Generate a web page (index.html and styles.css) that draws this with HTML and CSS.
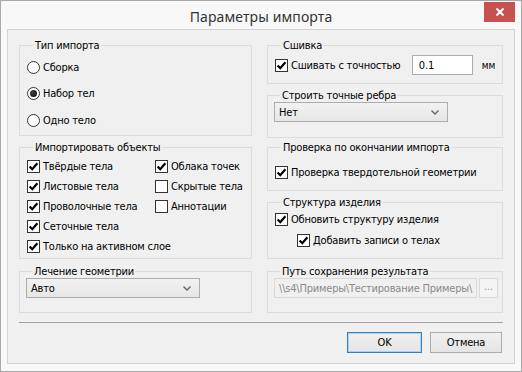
FILE: index.html
```html
<!DOCTYPE html>
<html lang="ru">
<head>
<meta charset="utf-8">
<title>Параметры импорта</title>
<link rel="stylesheet" href="styles.css">
</head>
<body>
<div class="window">
  <div class="titlebar">
    <span class="title">Параметры импорта</span>
    <span class="close-btn"><svg width="10" height="10" viewBox="0 0 10 10"><path d="M1.5 1.5 L8.5 8.5 M8.5 1.5 L1.5 8.5" stroke="#fff" stroke-width="2" fill="none"/></svg></span>
  </div>
  <div class="client">
    <div class="columns">
      <div class="col">
        <div class="group g-type">
          <div class="gtitle">Тип импорта</div>
          <div class="radio-list">
            <div class="opt"><span class="radio"></span><span>Сборка</span></div>
            <div class="opt"><span class="radio on"></span><span>Набор тел</span></div>
            <div class="opt"><span class="radio"></span><span>Одно тело</span></div>
          </div>
        </div>
        <div class="group g-objects">
          <div class="gtitle">Импортировать объекты</div>
          <div class="obj-grid">
            <div class="opt"><span class="cb on"><svg viewBox="0 0 11 11"><path d="M1.6 5.4 L4.3 8.2 L9.4 2.2"/></svg></span><span>Твёрдые тела</span></div>
            <div class="opt"><span class="cb on"><svg viewBox="0 0 11 11"><path d="M1.6 5.4 L4.3 8.2 L9.4 2.2"/></svg></span><span>Облака точек</span></div>
            <div class="opt"><span class="cb on"><svg viewBox="0 0 11 11"><path d="M1.6 5.4 L4.3 8.2 L9.4 2.2"/></svg></span><span>Листовые тела</span></div>
            <div class="opt"><span class="cb"></span><span>Скрытые тела</span></div>
            <div class="opt"><span class="cb on"><svg viewBox="0 0 11 11"><path d="M1.6 5.4 L4.3 8.2 L9.4 2.2"/></svg></span><span>Проволочные тела</span></div>
            <div class="opt"><span class="cb"></span><span>Аннотации</span></div>
            <div class="opt span2"><span class="cb on"><svg viewBox="0 0 11 11"><path d="M1.6 5.4 L4.3 8.2 L9.4 2.2"/></svg></span><span>Сеточные тела</span></div>
            <div class="opt span2"><span class="cb on"><svg viewBox="0 0 11 11"><path d="M1.6 5.4 L4.3 8.2 L9.4 2.2"/></svg></span><span>Только на активном слое</span></div>
          </div>
        </div>
        <div class="group g-heal">
          <div class="gtitle">Лечение геометрии</div>
          <div class="combo"><span>Авто</span><svg class="chev" width="8" height="5" viewBox="0 0 8 5"><path d="M0.5 0.5 L4 4 L7.5 0.5" stroke="#666" stroke-width="1.4" fill="none"/></svg></div>
        </div>
      </div>
      <div class="col">
        <div class="group g-sew">
          <div class="gtitle">Сшивка</div>
          <div class="sew-row">
            <div class="opt sew-label"><span class="cb on"><svg viewBox="0 0 11 11"><path d="M1.6 5.4 L4.3 8.2 L9.4 2.2"/></svg></span><span>Сшивать с точностью</span></div>
            <div class="textbox tol">0.1</div>
            <span class="unit">мм</span>
          </div>
        </div>
        <div class="group g-edges">
          <div class="gtitle">Строить точные ребра</div>
          <div class="combo"><span>Нет</span><svg class="chev" width="8" height="5" viewBox="0 0 8 5"><path d="M0.5 0.5 L4 4 L7.5 0.5" stroke="#666" stroke-width="1.4" fill="none"/></svg></div>
        </div>
        <div class="group g-check">
          <div class="gtitle">Проверка по окончании импорта</div>
          <div class="opt"><span class="cb on"><svg viewBox="0 0 11 11"><path d="M1.6 5.4 L4.3 8.2 L9.4 2.2"/></svg></span><span>Проверка твердотельной геометрии</span></div>
        </div>
        <div class="group g-struct">
          <div class="gtitle">Структура изделия</div>
          <div class="opt"><span class="cb on"><svg viewBox="0 0 11 11"><path d="M1.6 5.4 L4.3 8.2 L9.4 2.2"/></svg></span><span>Обновить структуру изделия</span></div>
          <div class="opt indent"><span class="cb on"><svg viewBox="0 0 11 11"><path d="M1.6 5.4 L4.3 8.2 L9.4 2.2"/></svg></span><span>Добавить записи о телах</span></div>
        </div>
        <div class="group g-path">
          <div class="gtitle">Путь сохранения результата</div>
          <div class="path-row">
            <div class="textbox path">\\s4\Примеры\Тестирование Примеры\</div>
            <div class="browse">...</div>
          </div>
        </div>
      </div>
    </div>
    <div class="separator"></div>
    <div class="buttons">
      <div class="btn btn-ok">OK</div>
      <div class="btn btn-cancel">Отмена</div>
    </div>
  </div>
</div>
</body>
</html>
```
FILE: styles.css
```css
* { box-sizing: border-box; }
html, body { margin: 0; padding: 0; background: #ffffff; }
body {
  font-family: "DejaVu Sans Condensed", "DejaVu Sans", sans-serif;
  font-stretch: condensed;
  font-size: 11px;
  letter-spacing: -0.2px;
  color: #000;
}
.window {
  position: relative;
  width: 522px;
  height: 372px;
  border: 1px solid #a9a9a9;
  background: #f8f8f8;
  display: flex;
  flex-direction: column;
}
.titlebar {
  height: 28px;
  display: flex;
  align-items: center;
  justify-content: center;
  padding-top: 2px;
}
.title {
  font-family: "Noto Sans", "Open Sans", sans-serif;
  font-stretch: normal;
  font-size: 14px;
  letter-spacing: 0.1px;
  color: #333;
}
.close-btn {
  position: absolute;
  top: 1px;
  right: 6px;
  width: 31px;
  height: 20px;
  background: #c75050;
  display: flex;
  align-items: center;
  justify-content: center;
}
.close-btn svg { display: block; }
.client {
  margin: 0 6px;
  height: 335px;
  border: 1px solid #d3d3d3;
  background: #f0f0f0;
  display: flex;
  flex-direction: column;
}
.columns {
  display: flex;
  gap: 15px;
  padding: 15px 0 0 11px;
}
.col { display: flex; flex-direction: column; }
.col:first-child { width: 233px; }
.col:last-child { width: 236px; }
.group {
  border: 1px solid #dcdcdc;
  padding: 0 7px;
}
.gtitle {
  margin: -7px 0 0 6px;
  padding: 0 2px;
  line-height: 13px;
  height: 13px;
  width: fit-content;
  background: #f0f0f0;
  white-space: nowrap;
}
.opt {
  display: flex;
  align-items: center;
  height: 20px;
  gap: 3px;
  white-space: nowrap;
}
.radio {
  width: 13px;
  height: 13px;
  border: 1px solid #333;
  border-radius: 50%;
  background: #fff;
  flex: none;
  display: flex;
  align-items: center;
  justify-content: center;
}
.radio.on::after {
  content: "";
  width: 7px;
  height: 7px;
  border-radius: 50%;
  background: radial-gradient(circle at 40% 40%, #444, #000);
}
.cb {
  width: 13px;
  height: 13px;
  border: 1px solid #333;
  background: #fff;
  flex: none;
  display: block;
}
.cb svg { display: block; width: 11px; height: 11px; }
.cb svg path { fill: none; stroke: #000; stroke-width: 2.2; }

/* Left column */
.g-type { height: 91px; }
.radio-list {
  display: flex;
  flex-direction: column;
  gap: 6.5px;
  padding-top: 5px;
}
.g-objects { height: 112px; margin-top: 11px; }
.obj-grid {
  display: grid;
  grid-template-columns: 128px auto;
  grid-auto-rows: 20px;
  padding-top: 2px;
}
.span2 { grid-column: 1 / 3; }
.g-heal { height: 42px; margin-top: 12px; padding-left: 6px; padding-top: 5px; }
.g-heal .gtitle, .g-edges .gtitle, .g-path .gtitle { margin-top: -12px; }
.g-edges .gtitle { margin-top: -13px; }
.combo {
  width: 174px;
  height: 20px;
  border: 1px solid #acacac;
  background: linear-gradient(#f2f2f2, #e6e6e6);
  display: flex;
  align-items: center;
  justify-content: space-between;
  padding: 0 8px 0 4px;
}
.chev { display: block; }

/* Right column */
.g-sew { height: 39px; }
.sew-row {
  display: flex;
  align-items: center;
  height: 22px;
  margin-top: 2px;
}
.sew-label { width: 137px; }
.textbox {
  height: 20px;
  border: 1px solid #abadb3;
  background: #fff;
  display: flex;
  align-items: center;
  padding: 0 6px;
  white-space: nowrap;
  overflow: hidden;
}
.tol { width: 61px; }
.unit { margin-left: 9px; font-size: 10px; }
.g-edges { height: 43px; margin-top: 11px; padding-left: 6px; padding-top: 6px; }
.g-check { height: 44px; margin-top: 9px; }
.g-check .opt { margin-top: 8px; }
.g-struct { height: 57px; margin-top: 11px; }
.g-struct .opt + .opt { margin-top: 1px; }
.indent { padding-left: 22px; }
.g-path { height: 42px; margin-top: 12px; padding: 5px 0 0 6px; }
.path-row { display: flex; gap: 2px; }
.path {
  width: 203px;
  background: #f0f0f0;
  border-color: #d9d9d9;
  color: #8a8a8a;
  padding: 0 4px;
}
.browse {
  width: 19px;
  height: 20px;
  border: 1px solid #d9d9d9;
  background: #f4f4f4;
  color: #9a9a9a;
  display: flex;
  align-items: center;
  justify-content: center;
  padding-bottom: 3px;
}

.separator {
  margin: 9px 0 0 11px;
  width: 484px;
  height: 1px;
  background: #a0a0a0;
}
.buttons {
  display: flex;
  justify-content: flex-end;
  gap: 8px;
  padding: 9px 12px 0 0;
}
.btn {
  height: 21px;
  border: 1px solid #acacac;
  background: linear-gradient(#f0f0f0, #e5e5e5);
  display: flex;
  align-items: center;
  justify-content: center;
}
.btn-ok { width: 75px; border-color: #3c7fb1; box-shadow: inset 0 0 0 1px #a8d3f2; }
.btn-cancel { width: 72px; }
```
